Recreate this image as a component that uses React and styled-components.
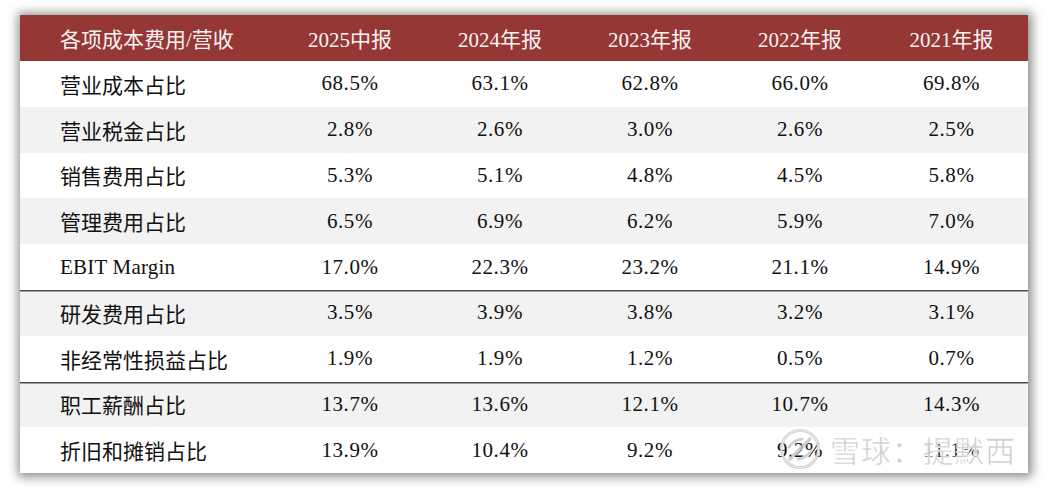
import React from "react";
import styled, { createGlobalStyle } from "styled-components";

const Global = createGlobalStyle`
  html, body { margin: 0; padding: 0; background: #ffffff; }
  body { font-family: "Liberation Serif", "Noto Sans CJK SC", serif; }
`;

const Page = styled.div`
  width: 1049px;
  height: 489px;
  padding: 15px 0 0 20px;
  box-sizing: border-box;
`;

const Table = styled.div`
  position: relative;
  width: 1008px;
  background: #ffffff;
  box-shadow: 1px 1px 10px 3px rgba(0, 0, 0, 0.45);
  display: flex;
  flex-direction: column;
`;

const Row = styled.div`
  display: grid;
  grid-template-columns: 255px 150px 150px 150px 150px 153px;
  height: ${(p) => (p.$head ? "46px" : "45.8px")};
  align-items: center;
  background: ${(p) => (p.$head ? "#953735" : p.$shade ? "#f2f2f2" : "#ffffff")};
  color: ${(p) => (p.$head ? "#fbf3f3" : "#111111")};
  box-shadow: ${(p) => (p.$rule ? "inset 0 1.5px 0 #4d4d4d" : "none")};
  font-family: "Liberation Serif", "Noto Sans CJK SC", serif;
  font-size: 21px;
`;

const Label = styled.div`
  padding-left: 40px;
  white-space: nowrap;
  letter-spacing: ${(p) => (p.$latin ? "0.2px" : "0")};
`;

const Cell = styled.div`
  text-align: center;
  white-space: nowrap;
  letter-spacing: ${(p) => (p.$num ? "0.6px" : "0")};
`;

const Watermark = styled.div`
  position: absolute;
  right: 12px;
  bottom: 2px;
  display: flex;
  align-items: center;
  gap: 8px;
  pointer-events: none;
`;

const MarkText = styled.span`
  font-family: "Noto Sans CJK SC", sans-serif;
  font-size: 30px;
  letter-spacing: 1px;
  color: rgba(190, 190, 190, 0.75);
  -webkit-text-stroke: 0.6px rgba(255, 255, 255, 0.9);
  text-shadow: 0 0 2px rgba(255, 255, 255, 0.9);
`;

const header = ["各项成本费用/营收", "2025中报", "2024年报", "2023年报", "2022年报", "2021年报"];

const rows = [
  ["营业成本占比", "68.5%", "63.1%", "62.8%", "66.0%", "69.8%"],
  ["营业税金占比", "2.8%", "2.6%", "3.0%", "2.6%", "2.5%"],
  ["销售费用占比", "5.3%", "5.1%", "4.8%", "4.5%", "5.8%"],
  ["管理费用占比", "6.5%", "6.9%", "6.2%", "5.9%", "7.0%"],
  ["EBIT Margin", "17.0%", "22.3%", "23.2%", "21.1%", "14.9%"],
  ["研发费用占比", "3.5%", "3.9%", "3.8%", "3.2%", "3.1%"],
  ["非经常性损益占比", "1.9%", "1.9%", "1.2%", "0.5%", "0.7%"],
  ["职工薪酬占比", "13.7%", "13.6%", "12.1%", "10.7%", "14.3%"],
  ["折旧和摊销占比", "13.9%", "10.4%", "9.2%", "9.2%", "11.1%"],
];

const ruleAt = new Set([5, 7]);

function Logo() {
  return (
    <svg width="44" height="44" viewBox="0 0 44 44">
      <circle cx="22" cy="22" r="18.5" fill="none" stroke="rgba(200,200,200,0.8)" strokeWidth="3" />
      <circle cx="22" cy="22" r="18.5" fill="none" stroke="rgba(255,255,255,0.7)" strokeWidth="0.8" />
      <path d="M12 32 L32 12" stroke="rgba(200,200,200,0.85)" strokeWidth="3.5" strokeLinecap="round" />
      <path d="M11 20 Q16 13 24 12" fill="none" stroke="rgba(200,200,200,0.85)" strokeWidth="3" strokeLinecap="round" />
      <path d="M33 24 Q28 31 20 32" fill="none" stroke="rgba(200,200,200,0.85)" strokeWidth="3" strokeLinecap="round" />
    </svg>
  );
}

export default function App() {
  return (
    <>
      <Global />
      <Page>
        <Table>
          <Row $head>
            <Label>{header[0]}</Label>
            {header.slice(1).map((h) => (
              <Cell key={h}>{h}</Cell>
            ))}
          </Row>
          {rows.map((r, i) => (
            <Row key={r[0]} $shade={i % 2 === 1} $rule={ruleAt.has(i)}>
              <Label $latin={/^[A-Za-z]/.test(r[0])}>{r[0]}</Label>
              {r.slice(1).map((v, j) => (
                <Cell key={j} $num>
                  {v}
                </Cell>
              ))}
            </Row>
          ))}
          <Watermark>
            <Logo />
            <MarkText>雪球：提默西</MarkText>
          </Watermark>
        </Table>
      </Page>
    </>
  );
}
